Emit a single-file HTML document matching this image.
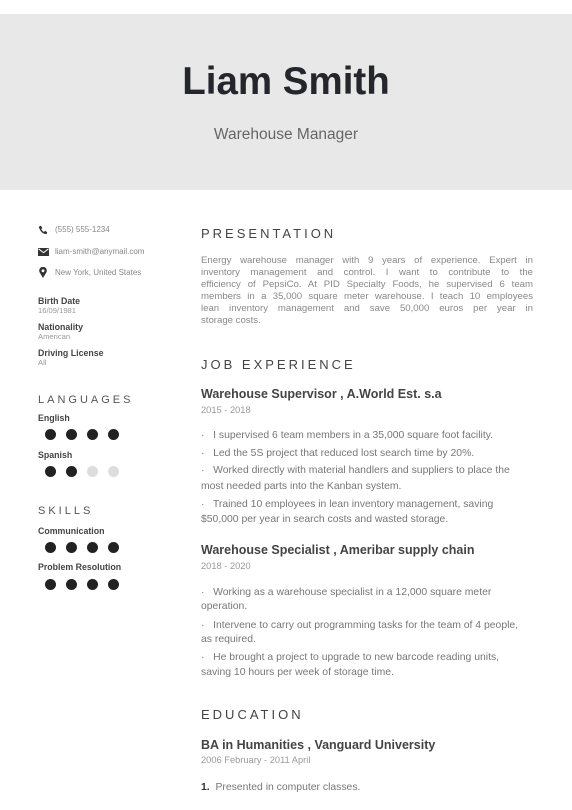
<!DOCTYPE html>
<html><head><meta charset="utf-8"><style>
*{margin:0;padding:0;box-sizing:border-box}
body{width:572px;height:810px;background:#fff;position:relative;overflow:hidden;font-family:"Liberation Sans",sans-serif;color:#333}
.a{position:absolute;white-space:nowrap}
.hdr{position:absolute;left:0;top:14px;width:572px;height:176px;background:#e8e8e8}
.h{font-size:13px;letter-spacing:3px;color:#444;line-height:16px}
.hs{font-size:11px;letter-spacing:3px;color:#555;line-height:14px}
.c{font-size:8px;color:#888;line-height:10px}
.lb{font-size:8.8px;font-weight:bold;color:#444;line-height:10px}
.v{font-size:7.6px;color:#999;line-height:10px}
.d{position:absolute;width:11px;height:11px;border-radius:50%;background:#222}
.d.g{background:#ddd}
.t{font-size:12.5px;font-weight:bold;color:#444;line-height:14px}
.dt{font-size:9.3px;color:#999;line-height:10px}
.b{font-size:10.4px;color:#777;line-height:12px}
.pl{position:absolute;left:201px;width:332px;font-size:9.6px;color:#888;line-height:12px;text-align:justify;text-align-last:justify;white-space:nowrap}
</style></head><body>
<div class="hdr"></div>
<div class="a" style="left:0;width:572px;text-align:center;top:59px;font-size:38.5px;font-weight:bold;color:#24262b;line-height:46px">Liam Smith</div>
<div class="a" style="left:0;width:572px;text-align:center;top:125px;font-size:15.5px;color:#666;line-height:20px">Warehouse Manager</div>

<svg class="a" style="left:38px;top:225px" width="10" height="10" viewBox="0 0 10 10"><path d="M1 1.5L3 0.8 4.3 3 3.2 4.1Q4.3 6.2 6 7L7 5.8 9.2 7.1 8.5 9.2Q3 9 0.8 2Z" fill="#333"/></svg>
<div class="a c" style="left:55px;top:225px">(555) 555-1234</div>
<svg class="a" style="left:38px;top:248px" width="11" height="8" viewBox="0 0 11 8"><rect width="11" height="8" fill="#333"/><path d="M0.5 0.8L5.5 4.6 10.5 0.8" stroke="#fff" stroke-width="1" fill="none"/></svg>
<div class="a c" style="left:55px;top:247px">liam-smith@anymail.com</div>
<svg class="a" style="left:39px;top:267px" width="8" height="11" viewBox="0 0 8 11"><path d="M4 11L0.7 5.5A3.8 3.8 0 1 1 7.3 5.5Z" fill="#333"/><circle cx="4" cy="3.8" r="1.4" fill="#fff"/></svg>
<div class="a c" style="left:55px;top:268px">New York, United States</div>

<div class="a lb" style="left:38px;top:296px">Birth Date</div>
<div class="a v" style="left:38px;top:306px">16/09/1981</div>
<div class="a lb" style="left:38px;top:322px">Nationality</div>
<div class="a v" style="left:38px;top:332px">American</div>
<div class="a lb" style="left:38px;top:348px">Driving License</div>
<div class="a v" style="left:38px;top:358px">All</div>

<div class="a hs" style="left:38px;top:393px">LANGUAGES</div>
<div class="a lb" style="left:38px;top:413px">English</div>
<div class="d" style="left:45px;top:429px"></div><div class="d" style="left:66px;top:429px"></div><div class="d" style="left:87px;top:429px"></div><div class="d" style="left:108px;top:429px"></div>
<div class="a lb" style="left:38px;top:450px">Spanish</div>
<div class="d" style="left:45px;top:466px"></div><div class="d" style="left:66px;top:466px"></div><div class="d g" style="left:87px;top:466px"></div><div class="d g" style="left:108px;top:466px"></div>
<div class="a hs" style="left:38px;top:504px">SKILLS</div>
<div class="a lb" style="left:38px;top:526px">Communication</div>
<div class="d" style="left:45px;top:542px"></div><div class="d" style="left:66px;top:542px"></div><div class="d" style="left:87px;top:542px"></div><div class="d" style="left:108px;top:542px"></div>
<div class="a lb" style="left:38px;top:562px">Problem Resolution</div>
<div class="d" style="left:45px;top:579px"></div><div class="d" style="left:66px;top:579px"></div><div class="d" style="left:87px;top:579px"></div><div class="d" style="left:108px;top:579px"></div>

<div class="a h" style="left:201px;top:226px">PRESENTATION</div>
<div class="pl" style="top:255px">Energy warehouse manager with 9 years of experience. Expert in</div>
<div class="pl" style="top:267px">inventory management and control. I want to contribute to the</div>
<div class="pl" style="top:279px">efficiency of PepsiCo. At PID Specialty Foods, he supervised 6 team</div>
<div class="pl" style="top:291px">members in a 35,000 square meter warehouse. I teach 10 employees</div>
<div class="pl" style="top:303px">lean inventory management and save 50,000 euros per year in</div>
<div class="pl" style="top:315px;text-align-last:left">storage costs.</div>

<div class="a h" style="left:201px;top:357px">JOB EXPERIENCE</div>
<div class="a t" style="left:201px;top:387px">Warehouse Supervisor , A.World Est. s.a</div>
<div class="a dt" style="left:201px;top:405px">2015 - 2018</div>
<div class="a b" style="left:201px;top:430px">·&nbsp;&nbsp; I supervised 6 team members in a 35,000 square foot facility.</div>
<div class="a b" style="left:201px;top:448px">·&nbsp;&nbsp; Led the 5S project that reduced lost search time by 20%.</div>
<div class="a b" style="left:201px;top:465px">·&nbsp;&nbsp; Worked directly with material handlers and suppliers to place the</div>
<div class="a b" style="left:201px;top:481px">most needed parts into the Kanban system.</div>
<div class="a b" style="left:201px;top:499px">·&nbsp;&nbsp; Trained 10 employees in lean inventory management, saving</div>
<div class="a b" style="left:201px;top:514px">$50,000 per year in search costs and wasted storage.</div>

<div class="a t" style="left:201px;top:543px">Warehouse Specialist , Ameribar supply chain</div>
<div class="a dt" style="left:201px;top:561px">2018 - 2020</div>
<div class="a b" style="left:201px;top:587px">·&nbsp;&nbsp; Working as a warehouse specialist in a 12,000 square meter</div>
<div class="a b" style="left:201px;top:601px">operation.</div>
<div class="a b" style="left:201px;top:620px">·&nbsp;&nbsp; Intervene to carry out programming tasks for the team of 4 people,</div>
<div class="a b" style="left:201px;top:634px">as required.</div>
<div class="a b" style="left:201px;top:652px">·&nbsp;&nbsp; He brought a project to upgrade to new barcode reading units,</div>
<div class="a b" style="left:201px;top:667px">saving 10 hours per week of storage time.</div>

<div class="a h" style="left:201px;top:707px">EDUCATION</div>
<div class="a t" style="left:201px;top:738px">BA in Humanities , Vanguard University</div>
<div class="a dt" style="left:201px;top:755px">2006 February - 2011 April</div>
<div class="a b" style="left:201px;top:782px"><b style="color:#333">1.</b>&nbsp; Presented in computer classes.</div>
</body></html>
